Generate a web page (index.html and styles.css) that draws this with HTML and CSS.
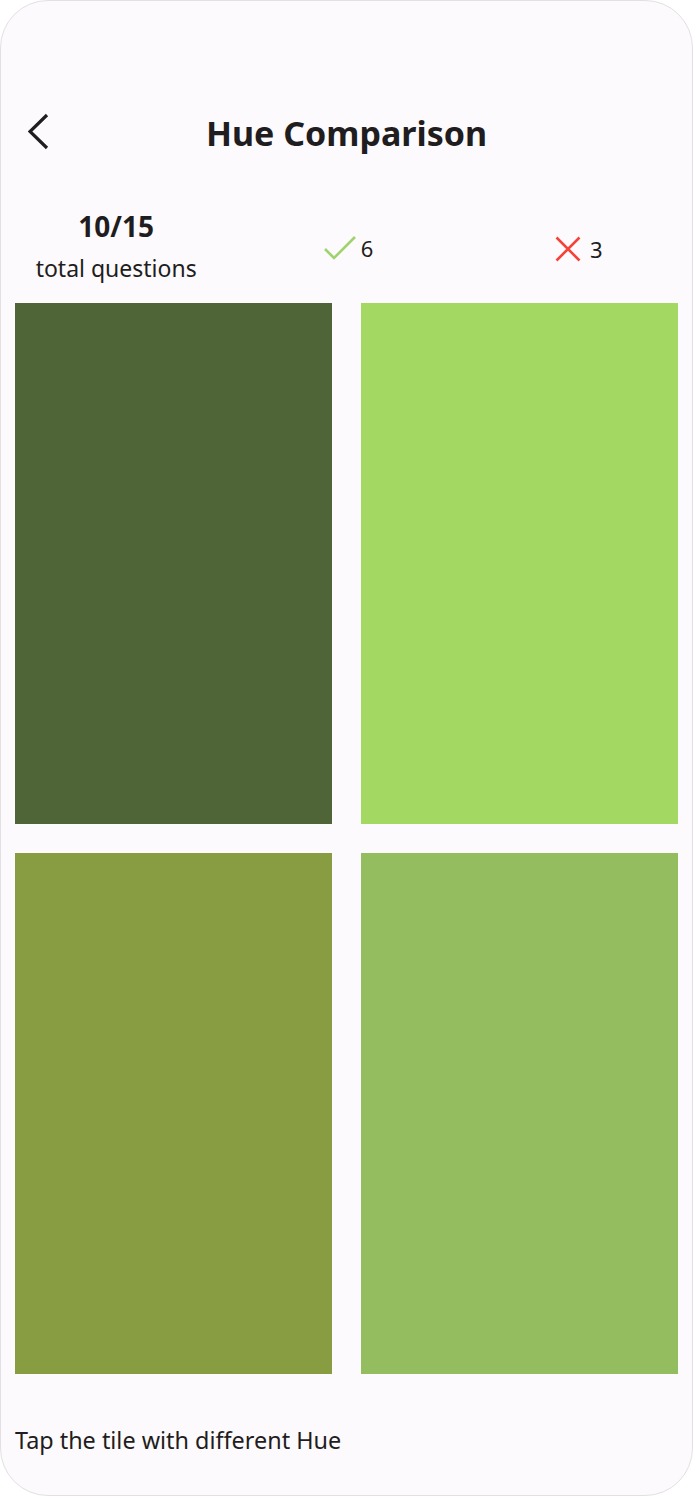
FILE: index.html
```html
<!DOCTYPE html>
<html lang="en">
<head>
<meta charset="utf-8">
<title>Hue Comparison</title>
<link rel="stylesheet" href="styles.css">
</head>
<body>
<div class="frame">
  <header class="header">
    <button class="back" aria-label="Back">
      <svg width="24" height="38" viewBox="0 0 24 38"><polyline points="19,2 2,18.5 19,35" fill="none" stroke="#1f1d20" stroke-width="3.2" stroke-linecap="butt" stroke-linejoin="miter"/></svg>
    </button>
    <h1 class="title">Hue Comparison</h1>
  </header>
  <section class="stats">
    <div class="stat total">
      <div class="count">10/15</div>
      <div class="label">total questions</div>
    </div>
    <div class="stat mark right">
      <svg width="32" height="24" viewBox="0 0 32 24"><polyline points="1,13 10,22 31,1" fill="none" stroke="#9fd36c" stroke-width="2.6"/></svg>
      <span class="num">6</span>
    </div>
    <div class="stat mark wrong">
      <svg width="26" height="26" viewBox="0 0 26 26"><path d="M1.5 1.5 L24.5 24.5 M24.5 1.5 L1.5 24.5" fill="none" stroke="#f4443a" stroke-width="2.6"/></svg>
      <span class="num">3</span>
    </div>
  </section>
  <main class="grid">
    <div class="tile t1"></div>
    <div class="tile t2"></div>
    <div class="tile t3"></div>
    <div class="tile t4"></div>
  </main>
  <p class="hint">Tap the tile with different Hue</p>
</div>
</body>
</html>
```
FILE: styles.css
```css
* { box-sizing: border-box; }
html, body { margin: 0; padding: 0; background: #ffffff; }
body { font-family: "Noto Sans", "Open Sans", sans-serif; color: #1f1d20; }

.frame {
  width: 693px;
  height: 1496px;
  border: 1px solid #e3dfe3;
  border-radius: 48px;
  background: #fdfafd;
  overflow: hidden;
  display: flex;
  flex-direction: column;
}

.header {
  height: 64px;
  margin-top: 100px;
  display: flex;
  align-items: center;
  justify-content: center;
  position: relative;
}
.back {
  position: absolute;
  left: 27px;
  top: 12px;
  padding: 0;
  border: 0;
  background: none;
  display: flex;
}
.title {
  margin: 0;
  font-size: 34px;
  font-weight: 700;
  line-height: 1;
}

.stats {
  margin-top: 43px;
  height: 95px;
  display: grid;
  grid-template-columns: 1fr 1fr 1fr;
  align-items: start;
}
.stat { display: flex; justify-content: center; align-items: center; }
.total { flex-direction: column; }
.count { font-size: 28px; font-weight: 700; line-height: 36px; }
.label { font-size: 23px; line-height: 30px; margin-top: 9px; }
.mark { gap: 5px; padding-top: 28px; }
.right { padding-left: 4px; }
.wrong { gap: 9px; padding-left: 4px; }
.num { font-size: 22px; line-height: 24px; }

.grid {
  margin: 0 14px;
  display: grid;
  grid-template-columns: 317px 317px;
  grid-template-rows: 521px 521px;
  column-gap: 29px;
  row-gap: 29px;
}
.tile { width: 100%; height: 100%; }
.t1 { background: #4f6537; }
.t2 { background: #a3d862; }
.t3 { background: #889d42; }
.t4 { background: #93bd5f; }

.hint {
  margin: 51px 0 0 14px;
  font-size: 23.4px;
  line-height: 30px;
}
```
